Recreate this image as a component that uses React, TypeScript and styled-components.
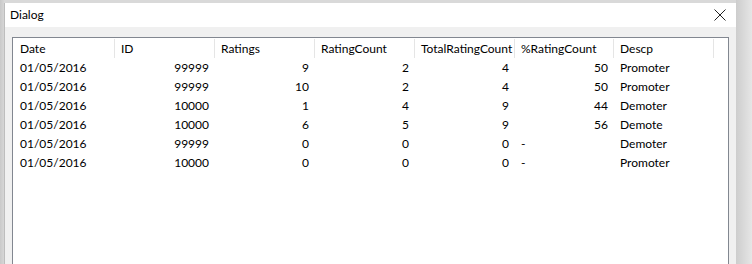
import React from "react";
import styled, { createGlobalStyle } from "styled-components";

const Global = createGlobalStyle`
  html, body { margin: 0; padding: 0; height: 264px; overflow: hidden; }
  body { font-family: Lato, "Noto Sans", sans-serif; font-size: 12px; color: #000; }
`;

const Page = styled.div`
  width: 752px;
  height: 264px;
  box-sizing: border-box;
  padding: 3px 16px 0 4px;
  background:
    linear-gradient(to right, #c9c9c9 0px, #d6d6d6 4px, transparent 4px),
    linear-gradient(to right, transparent 736px, #cdcdcd 736px, #e6e6e6 752px),
    #d9d9d9;
  display: flex;
`;

const Window = styled.div`
  flex: 1;
  display: flex;
  flex-direction: column;
  background: #f0f0f0;
  border-left: 1px solid #bdbdbd;
`;

const TitleBar = styled.div`
  height: 24px;
  background: #ffffff;
  display: flex;
  align-items: center;
  justify-content: space-between;
  padding: 0 10px 0 5px;
`;

const Title = styled.span`
  font-size: 12px;
  line-height: 24px;
`;

const Close = styled.svg`
  width: 12px;
  height: 12px;
  display: block;
`;

const Body = styled.div`
  flex: 1;
  display: flex;
  padding: 10px 7px 0 7px;
`;

const List = styled.div`
  flex: 1;
  background: #ffffff;
  border: 1px solid #828790;
  border-bottom: none;
  padding: 1px 0 0 1px;
`;

const Row = styled.div`
  display: flex;
  height: 19px;
  align-items: center;
`;

const HeaderRow = styled(Row)`
  height: 19px;
`;

const Cell = styled.div<{ $align?: "left" | "right"; $w?: number }>`
  width: ${(p) => p.$w ?? 100}px;
  flex: none;
  box-sizing: border-box;
  padding: 0 6px;
  text-align: ${(p) => p.$align ?? "left"};
  white-space: nowrap;
  overflow: hidden;
  line-height: 19px;
`;

const HeadCell = styled(Cell)`
  height: 19px;
  border-right: 1px solid #e5e5e5;
`;

const headers = ["Date", "ID", "Ratings", "RatingCount", "TotalRatingCount", "%RatingCount", "Descp"];

type R = [string, string, string, string, string, string, string];
const rows: R[] = [
  ["01/05/2016", "99999", "9", "2", "4", "50", "Promoter"],
  ["01/05/2016", "99999", "10", "2", "4", "50", "Promoter"],
  ["01/05/2016", "10000", "1", "4", "9", "44", "Demoter"],
  ["01/05/2016", "10000", "6", "5", "9", "56", "Demote"],
  ["01/05/2016", "99999", "0", "0", "0", "-", "Demoter"],
  ["01/05/2016", "10000", "0", "0", "0", "-", "Promoter"],
];

const widths = [101, 100, 100, 100, 100, 99, 100];

export default function App() {
  return (
    <>
      <Global />
      <Page>
        <Window>
          <TitleBar>
            <Title>Dialog</Title>
            <Close viewBox="0 0 12 12">
              <path d="M0.5 0.5 L11.5 11.5 M11.5 0.5 L0.5 11.5" stroke="#222" strokeWidth="1" fill="none" />
            </Close>
          </TitleBar>
          <Body>
            <List>
              <HeaderRow>
                {headers.map((h, i) => (
                  <HeadCell key={h} $w={widths[i]}>{h}</HeadCell>
                ))}
              </HeaderRow>
              {rows.map((r, ri) => (
                <Row key={ri}>
                  {r.map((v, i) => {
                    const right = i >= 1 && i <= 5 && !(i === 5 && v === "-");
                    return (
                      <Cell key={i} $w={widths[i]} $align={right ? "right" : "left"}>
                        {v}
                      </Cell>
                    );
                  })}
                </Row>
              ))}
            </List>
          </Body>
        </Window>
      </Page>
    </>
  );
}
